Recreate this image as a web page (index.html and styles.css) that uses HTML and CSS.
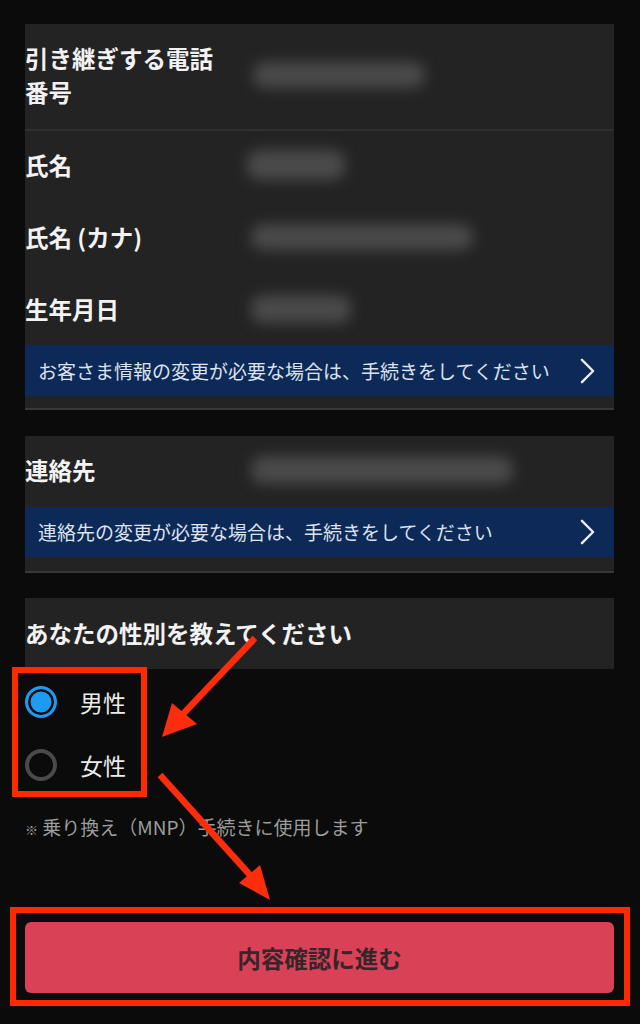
FILE: index.html
```html
<!DOCTYPE html>
<html lang="ja">
<head>
<meta charset="utf-8">
<title>お客さま情報の確認</title>
<link rel="stylesheet" href="styles.css">
</head>
<body>
<main class="page">
  <section class="card card--info">
    <div class="row row--head">
      <div class="label">引き継ぎする電話番号</div>
      <div class="value"><span class="blur blur--phone"></span></div>
    </div>
    <div class="rows">
      <div class="row">
        <div class="label">氏名</div>
        <div class="value"><span class="blur blur--name"></span></div>
      </div>
      <div class="row">
        <div class="label">氏名 (カナ)</div>
        <div class="value"><span class="blur blur--kana"></span></div>
      </div>
      <div class="row">
        <div class="label">生年月日</div>
        <div class="value"><span class="blur blur--birth"></span></div>
      </div>
    </div>
    <a class="notice" href="#">
      <span>お客さま情報の変更が必要な場合は、手続きをしてください</span>
      <svg class="chev" viewBox="0 0 16 28" aria-hidden="true"><path d="M2 2 L14 14 L2 26"/></svg>
    </a>
  </section>

  <section class="card card--contact">
    <div class="row">
      <div class="label">連絡先</div>
      <div class="value"><span class="blur blur--mail"></span></div>
    </div>
    <a class="notice" href="#">
      <span>連絡先の変更が必要な場合は、手続きをしてください</span>
      <svg class="chev" viewBox="0 0 16 28" aria-hidden="true"><path d="M2 2 L14 14 L2 26"/></svg>
    </a>
  </section>

  <section class="card card--question">
    <h2 class="question">あなたの性別を教えてください</h2>
  </section>

  <div class="radios">
    <label class="radio"><span class="dot dot--on"></span><span class="radio-text">男性</span></label>
    <label class="radio"><span class="dot"></span><span class="radio-text">女性</span></label>
  </div>

  <p class="note"><span class="mark">※</span> 乗り換え（MNP）手続きに使用します</p>

  <button class="submit" type="button">内容確認に進む</button>
</main>

<svg class="annot" viewBox="0 0 640 1024" aria-hidden="true">
  <rect class="box" x="15" y="670" width="129" height="124"/>
  <rect class="box" x="13" y="910" width="614" height="93"/>
  <line class="shaft" x1="255" y1="638" x2="183" y2="714"/>
  <polygon class="head" points="162,737 172,703 197,724"/>
  <line class="shaft" x1="160" y1="775" x2="250" y2="875"/>
  <polygon class="head" points="270,900 239,883 260,865"/>
</svg>
</body>
</html>
```

FILE: styles.css
```css
* {
  box-sizing: border-box;
}

html, body {
  margin: 0;
  padding: 0;
}

body {
  position: relative;
  width: 640px;
  height: 1024px;
  overflow: hidden;
  background: #0b0b0b;
  color: #f0f0f0;
  font-family: "Noto Sans CJK JP", "Noto Sans", sans-serif;
}

.page {
  padding: 24px 26px 0 25px;
  display: flex;
  flex-direction: column;
}

.card {
  background: #232323;
}

.card--info,
.card--contact {
  border-bottom: 2px solid #383838;
}

.card--info {
  padding-bottom: 12px;
}

.card--contact {
  margin-top: 26px;
  padding-top: 17px;
  padding-bottom: 14px;
}

.card--question {
  margin-top: 25px;
  padding: 18px 0 19px;
}

.row {
  display: flex;
  align-items: center;
}

.row--head {
  padding: 17px 0 20px;
  border-bottom: 2px solid #303030;
}

.rows {
  padding-top: 17px;
  display: flex;
  flex-direction: column;
  gap: 38px;
}

.label {
  width: 222px;
  flex: none;
  padding-right: 24px;
  font-size: 23.5px;
  font-weight: 700;
  line-height: 34px;
  color: #f2f2f2;
}

.value {
  flex: 1;
  display: flex;
  align-items: center;
  padding-left: 4px;
}

.blur {
  display: block;
  height: 26px;
  border-radius: 12px;
  background: #4a4a4a;
  filter: blur(7px);
}

.blur--phone { width: 172px; margin-left: 2px; }
.blur--name  { width: 98px; height: 30px; margin-left: -4px; }
.blur--kana  { width: 222px; }
.blur--birth { width: 100px; height: 28px; }
.blur--mail  { width: 262px; height: 28px; }

.notice {
  margin-top: 19px;
  height: 51px;
  display: flex;
  align-items: center;
  justify-content: space-between;
  padding: 0 19px 0 13px;
  background: #0c2958;
  color: #dde2ec;
  font-size: 19px;
  line-height: 26px;
  text-decoration: none;
}

.card--contact .notice {
  margin-top: 20px;
  height: 50px;
}

.chev {
  width: 15px;
  height: 26px;
  flex: none;
}

.chev path {
  fill: none;
  stroke: #e9ecf2;
  stroke-width: 2.6;
  stroke-linecap: round;
  stroke-linejoin: round;
}

.question {
  margin: 0;
  font-size: 23.5px;
  font-weight: 700;
  line-height: 34px;
  color: #f2f2f2;
}

.radios {
  padding-top: 13px;
  display: flex;
  flex-direction: column;
  gap: 23px;
}

.radio {
  height: 40px;
  display: flex;
  align-items: center;
  gap: 23px;
}

.dot {
  width: 32px;
  height: 32px;
  flex: none;
  border-radius: 50%;
  border: 4px solid #4a4a4a;
}

.dot--on {
  border: 3px solid #1e9bf0;
  background: #1e9bf0;
  box-shadow: inset 0 0 0 2.5px #0b0b0b;
}

.radio-text {
  font-size: 23px;
  line-height: 30px;
  color: #ececec;
}

.note {
  margin: 29px 0 0;
  font-size: 19px;
  line-height: 26px;
  color: #9c9c9c;
}

.mark {
  font-size: 13px;
}

.submit {
  margin-top: 79px;
  height: 71px;
  width: 100%;
  border: none;
  border-radius: 6px;
  background: #d94157;
  color: #35262a;
  font-family: "Noto Sans CJK JP", "Noto Sans", sans-serif;
  font-size: 23.5px;
  font-weight: 700;
  padding: 0;
}

.annot {
  position: absolute;
  left: 0;
  top: 0;
  width: 640px;
  height: 1024px;
  pointer-events: none;
}

.box {
  fill: none;
  stroke: #ff2a00;
  stroke-width: 6;
}

.shaft {
  stroke: #fb2d0c;
  stroke-width: 6.5;
  stroke-linecap: butt;
}

.head {
  fill: #fb2d0c;
}
```
